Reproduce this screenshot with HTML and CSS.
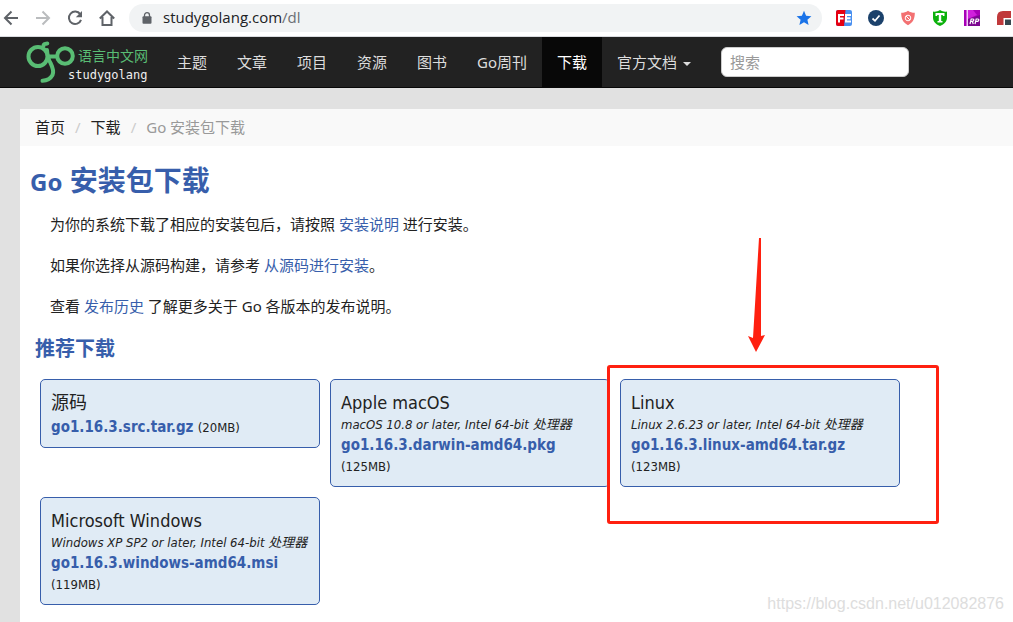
FILE: index.html
```html
<!DOCTYPE html>
<html lang="zh-CN">
<head>
<meta charset="utf-8">
<title>Go 安装包下载</title>
<link rel="stylesheet" href="styles.css">
</head>
<body>
<div class="toolbar">
  <div class="browser-nav">
    <button class="tool" aria-label="后退"><svg width="16" height="16" viewBox="0 0 16 16" fill="none" stroke="#5f6368" stroke-width="2"><path d="M15 8H2M8.500 1.500 2 8l6.500 6.500"/></svg></button>
    <button class="tool" aria-label="前进"><svg width="16" height="16" viewBox="0 0 16 16" fill="none" stroke="#babcbe" stroke-width="2"><path d="M1 8h13M7.500 1.500 14 8l-6.500 6.500"/></svg></button>
    <button class="tool" aria-label="刷新"><svg width="16" height="16" viewBox="0 0 16 16" fill="none" stroke="#5f6368" stroke-width="2"><path d="M13.200 4.200A6.200 6.200 0 1 0 14 9.800"/><path d="M15 1v6.200H8.800z" fill="#5f6368" stroke="none"/></svg></button>
    <button class="tool" aria-label="主页"><svg width="16" height="16" viewBox="0 0 16 16" fill="none" stroke="#5f6368" stroke-width="2"><path d="M.8 8.500 8 1.500l7.200 7M3.500 7v8h9V7"/></svg></button>
  </div>
  <div class="omnibox">
    <svg class="lock" width="10" height="12" viewBox="0 0 10 12"><path d="M2.500 5V3.200a2.500 2.500 0 0 1 5 0V5" fill="none" stroke="#5f6368" stroke-width="1.300"/><rect x=".5" y="4.300" width="9" height="7.400" rx="1" fill="#5f6368"/></svg>
    <span class="url">studygolang.com<span class="path">/dl</span></span>
    <svg width="16" height="16" viewBox="0 0 16 16"><path d="M8 .8l2.100 5 5.300.5-4 3.500 1.200 5.300L8 12.300l-4.600 2.800 1.200-5.300-4-3.500 5.300-.5z" fill="#1a73e8"/></svg>
  </div>
  <div class="extensions">
    <svg width="16" height="16" viewBox="0 0 16 16"><rect width="16" height="16" rx="2" fill="#4a90f0"/><path d="M2 0h7.500L8 16H2a2 2 0 0 1-2-2V2a2 2 0 0 1 2-2z" fill="#e60012"/><path d="M3 12.500V5h5M3 8.500h4.500M15 5h-5v6.500h5M10 8.200h4.500" fill="none" stroke="#fff" stroke-width="2"/></svg>
    <svg width="16" height="16" viewBox="0 0 16 16"><circle cx="8" cy="8" r="8" fill="#1b416b"/><path d="M4.500 8.500l2.500 2.300 4.500-5.300" fill="none" stroke="#fff" stroke-width="1.700"/></svg>
    <svg width="16" height="16" viewBox="0 0 16 16"><path d="M8 .8c2 1.500 4 2 6.800 2 0 5.500-1.300 9.500-6.800 12.400C2.500 12.300 1.200 8.300 1.200 2.800 4 2.800 6 2.300 8 .8z" fill="#f37172"/><circle cx="8" cy="8" r="2.800" fill="none" stroke="#fff"/><path d="M6 6l4 4" stroke="#fff"/></svg>
    <svg width="16" height="16" viewBox="0 0 16 16"><path d="M1 1.500c2.500.6 4.500 0 7-1.500 2.500 1.500 4.500 2.100 7 1.500v6c0 4-2.500 6.500-7 8.500-4.500-2-7-4.500-7-8.500z" fill="#0cb10c"/><path d="M3.500 3h9v3h-1.700V5H9.200v6h1.300v1.500h-5V11h1.300V5H5.200v1H3.500z" fill="#fff"/></svg>
    <svg width="16" height="16" viewBox="0 0 16 16"><path fill="#a800b8" d="M0 0h16v16H0z"/><path fill="#d020dc" d="M4 0h5l4 5-9 4z"/><path fill="#7c0890" d="M4 9l12-4v11H4z"/><path fill="#f5c8fa" d="M2.500 0H4v16H2.500z"/><path d="M6 14l1.200-5h1.600q1.500.3.800 1.600-.5.900-2.500.9M8.300 11.500l1 2.500M11 14l1.200-5h1.600q1.500.3.800 1.600-.5.900-2.500.9" fill="none" stroke="#fff" stroke-width="1.200"/></svg>
    <svg width="16" height="16" viewBox="0 0 16 16"><path d="M1 15V7q0-6 6-6h8v14z" fill="#c0393b"/><path d="M7.500 15V8H15v7z" fill="#fff"/><path d="M9 9.500h6V15H9z" fill="#37474f"/></svg>
  </div>
</div>

<header class="navbar">
  <a class="logo" href="#" aria-label="语言中文网 studygolang">
    <svg width="124" height="50" viewBox="25 37 124 50">
      <g fill="none" stroke="#59bd74" stroke-width="4" stroke-linecap="round">
        <circle cx="38" cy="56.500" r="9.500"/>
        <circle cx="65" cy="56" r="7.800"/>
        <path d="M49 56.500h8M43.500 46q-.2-2.300 3.800-2.600M47 50q.5 8 3.500 13 4 8 2 12-3 5.500-10 5.800"/>
      </g>
      <text class="logo-cn" x="78" y="61">语言中文网</text>
      <text class="logo-en" x="68" y="79">studygolang</text>
    </svg>
  </a>
  <nav class="menu">
    <a href="#">主题</a><a href="#">文章</a><a href="#">项目</a><a href="#">资源</a><a href="#">图书</a><a href="#">Go周刊</a><a class="active" href="#">下载</a><a class="dropdown" href="#">官方文档</a>
  </nav>
  <form class="search"><input type="text" placeholder="搜索" aria-label="搜索"></form>
</header>

<main class="content">
  <ol class="breadcrumb">
    <li><a href="#">首页</a></li>
    <li><a href="#">下载</a></li>
    <li class="current">Go 安装包下载</li>
  </ol>
  <article class="article">
    <h1><span class="latin">Go</span> 安装包下载</h1>
    <p>为你的系统下载了相应的安装包后，请按照 <a href="#">安装说明</a> 进行安装。</p>
    <p>如果你选择从源码构建，请参考 <a href="#">从源码进行安装</a>。</p>
    <p>查看 <a href="#">发布历史</a> 了解更多关于 Go 各版本的发布说明。</p>
    <h2>推荐下载</h2>
    <div class="downloads">
      <section class="card">
        <h3>源码</h3>
        <div class="file"><a href="#">go1.16.3.src.tar.gz</a> <span class="size">(20MB)</span></div>
      </section>
      <section class="card">
        <h3>Apple macOS</h3>
        <div class="requires">macOS 10.8 or later, Intel 64-bit 处理器</div>
        <div class="file"><a href="#">go1.16.3.darwin-amd64.pkg</a></div>
        <div class="size">(125MB)</div>
      </section>
      <section class="card">
        <h3>Linux</h3>
        <div class="requires">Linux 2.6.23 or later, Intel 64-bit 处理器</div>
        <div class="file"><a href="#">go1.16.3.linux-amd64.tar.gz</a></div>
        <div class="size">(123MB)</div>
        <div class="marker"></div>
        <svg class="arrow" width="20" height="116" viewBox="0 0 20 116"><path d="M13 1h2v98l4-1-9 17-8-16 5 2z" fill="#ff2010"/></svg>
      </section>
      <section class="card">
        <h3>Microsoft Windows</h3>
        <div class="requires">Windows XP SP2 or later, Intel 64-bit 处理器</div>
        <div class="file"><a href="#">go1.16.3.windows-amd64.msi</a></div>
        <div class="size">(119MB)</div>
      </section>
    </div>
  </article>
</main>
<div class="watermark">https://blog.csdn.net/u012082876</div>
</body>
</html>
```
FILE: styles.css
```css
* { box-sizing: border-box; }

body {
  margin: 0;
  min-height: 100vh;
  display: flex;
  flex-direction: column;
  position: relative;
  overflow-x: hidden;
  background: #e1e1e1;
  color: #222;
  font: 15px/21px "Noto Sans", "Noto Sans CJK SC", sans-serif;
}

a { color: #375eab; text-decoration: none; }
h1, h2, h3, p, ol { margin: 0; padding: 0; font-weight: normal; }

.toolbar {
  display: flex;
  align-items: center;
  height: 37px;
  padding: 0 1px 1px 3px;
  background: #fff;
  border-bottom: 1px solid #dadce0;
}
.browser-nav { display: flex; gap: 16px; }
.tool { display: block; padding: 0; border: 0; background: none; }
.tool svg { display: block; }
.omnibox {
  flex: 1;
  display: flex;
  align-items: center;
  gap: 11px;
  height: 28px;
  margin: 0 14px;
  padding: 0 10px 0 13px;
  border-radius: 14px;
  background: #f1f3f4;
}
.url { flex: 1; font-family: "Open Sans", sans-serif; font-size: 15px; color: #202124; }
.path { color: #6b6f73; }
.extensions { display: flex; gap: 16px; }

.navbar {
  display: flex;
  align-items: center;
  height: 51px;
  padding-left: 25px;
  background: #222;
  border-bottom: 1px solid #080808;
}
.logo, .logo svg { display: block; }
.logo-cn { font: 14px "Noto Sans CJK SC", sans-serif; fill: #59bd74; }
.logo-en { font: 12px "DejaVu Sans Mono", monospace; fill: #eee; }
.menu { display: flex; margin-left: 13px; }
.menu a { padding: 0 15px; line-height: 50px; color: #ddd; }
.menu .active { background: #080808; color: #fff; }
.dropdown::after {
  content: "";
  display: inline-block;
  margin-left: 6px;
  vertical-align: middle;
  border: 4px solid transparent;
  border-top-color: #ddd;
  border-bottom: 0;
}
.search { margin-left: 15px; }
.search input {
  display: block;
  width: 188px;
  height: 30px;
  padding: 0 8px;
  border: 1px solid #ccc;
  border-radius: 6px;
  background: #fff;
  font: inherit;
}
.search input::placeholder { color: #999; }

.content { flex: 1; margin: 21px 0 0 20px; background: #fff; }
.breadcrumb {
  display: flex;
  padding: 8px 15px;
  background: #f9f9f9;
  list-style: none;
}
.breadcrumb a { color: #222; }
.breadcrumb li + li::before { content: "/"; padding: 0 10px; color: #ccc; }
.breadcrumb .current { color: #999; }

.article { padding: 14px 10px; }
h1 { color: #375eab; font-size: 28px; line-height: 40px; font-weight: bold; }
h1 .latin { font-size: 24px; }
.article p { margin: 0 20px 20px; }
.article h1 + p { margin-top: 12px; }
h2 { padding-left: 5px; color: #375eab; font-size: 20px; line-height: 24px; font-weight: bold; }

.downloads {
  display: flex;
  flex-wrap: wrap;
  align-items: flex-start;
  gap: 10px;
  max-width: 880px;
  padding: 18px 10px 0;
}
.card {
  position: relative;
  width: 280px;
  padding: 10px 10px 8px;
  border: 1px solid #375eab;
  border-radius: 5px;
  background: #e0ebf5;
  font-family: "DejaVu Sans Condensed", "Noto Sans CJK SC", sans-serif;
}
.card h3 { font-size: 18px; line-height: 26px; }
.requires { font-size: 13px; line-height: 18px; font-style: italic; white-space: nowrap; }
.file { font-size: 15px; line-height: 22px; }
.file a { font-weight: bold; }
.size { font-size: 13px; line-height: 22px; }

.marker {
  position: absolute;
  z-index: 1;
  top: -15px;
  left: -14px;
  width: 332px;
  height: 159px;
  border: 3px solid #ff2010;
  border-radius: 3px;
}
.arrow { position: absolute; top: -143px; left: 125px; }

.watermark {
  position: absolute;
  right: 9px;
  bottom: 8px;
  color: #ddd;
  font: 16px/20px "Liberation Sans", sans-serif;
}
```
